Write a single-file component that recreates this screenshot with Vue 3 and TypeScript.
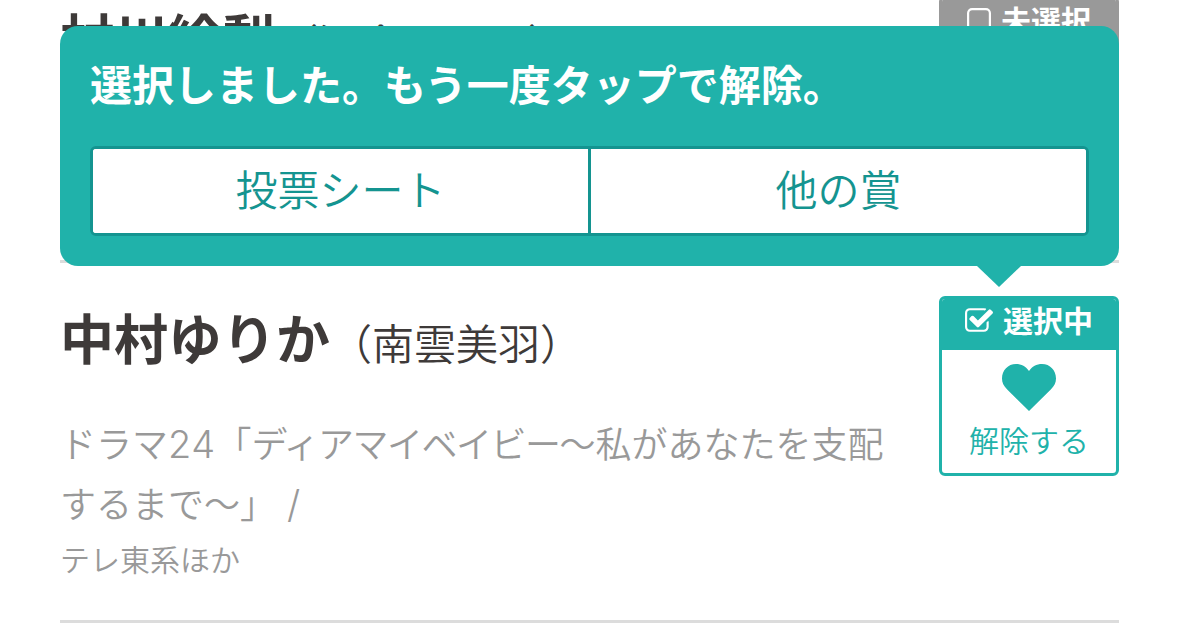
<template>
  <div class="page">
    <ul class="nominees">
      <li
        v-for="nominee in nominees"
        :key="nominee.name"
        class="nominee"
        :class="{ selected: nominee.selected }"
      >
        <div class="profile">
          <h2 class="name">{{ nominee.name }}<span class="role">（{{ nominee.role }}）</span></h2>
          <p v-if="nominee.lines.length" class="work">
            <span v-for="(line, i) in nominee.lines" :key="i" class="work-line">
              <span v-for="(part, j) in line" :key="j" :class="part.style">{{ part.text }}</span>
            </span>
          </p>
          <p v-if="nominee.station" class="station">{{ nominee.station }}</p>
        </div>

        <button type="button" class="vote" @click="nominee.selected = !nominee.selected">
          <span class="vote-state">
            <svg v-if="nominee.selected" class="check" viewBox="0 0 1664 1408">
              <path d="M1408 802v318q0 119-84.5 203.5t-203.5 84.5h-832q-119 0-203.5-84.5t-84.5-203.5v-832q0-119 84.5-203.5t203.5-84.5h832q63 0 117 25 15 7 18 23 3 17-9 29l-49 49q-10 10-23 10-3 0-9-2-23-6-45-6h-832q-66 0-113 47t-47 113v832q0 66 47 113t113 47h832q66 0 113-47t47-113v-254q0-13 9-22l64-64q10-10 23-10 6 0 12 3 20 8 20 29zm231-489l-814 814q-24 24-57 24t-57-24l-430-430q-24-24-24-57t24-57l110-110q24-24 57-24t57 24l263 263 647-647q24-24 57-24t57 24l110 110q24 24 24 57t-24 57z" />
            </svg>
            <svg v-else class="box" viewBox="0 0 24 24">
              <rect x="1.1" y="1.1" width="21.8" height="21.8" rx="4" />
            </svg>
            <span class="vote-state-text">{{ nominee.selected ? '選択中' : '未選択' }}</span>
          </span>
          <span class="vote-body">
            <svg class="heart" viewBox="0 0 54 47">
              <path d="M27 47L5.2 25.6C1.6 22 0 18.8 0 14.6C0 6.2 6 0 14 0C19.4 0 24 2.4 27 7C30 2.4 34.6 0 40 0C48 0 54 6.2 54 14.6C54 18.8 52.4 22 48.8 25.6Z" />
            </svg>
            <span class="vote-label">{{ nominee.selected ? '解除する' : '選択する' }}</span>
          </span>
        </button>
      </li>
    </ul>

    <div class="toast">
      <p class="toast-message">選択しました。もう一度タップで解除。</p>
      <div class="toast-actions">
        <button v-for="action in actions" :key="action" type="button" class="toast-action">{{ action }}</button>
      </div>
    </div>
  </div>
</template>

<script setup lang="ts">
import { ref } from 'vue'

interface TextPart {
  text: string
  style?: 'tight' | 'latin'
}

interface Nominee {
  name: string
  role: string
  lines: TextPart[][]
  station: string
  selected: boolean
}

const actions = ['投票シート', '他の賞']

const nominees = ref<Nominee[]>([
  { name: '村川絵梨', role: '沢倉さゆり', lines: [], station: '', selected: false },
  {
    name: '中村ゆりか',
    role: '南雲美羽',
    lines: [
      [
        { text: 'ドラマ' },
        { text: '24', style: 'latin' },
        { text: '「' },
        { text: 'ディアマイベイビー', style: 'tight' },
        { text: '〜私があなたを支配' }
      ],
      [{ text: 'するまで〜」' }, { text: ' /', style: 'latin' }]
    ],
    station: 'テレ東系ほか',
    selected: true
  }
])
</script>

<style>
body {
  margin: 0;
  background: #fff;
}
</style>

<style scoped>
.page {
  position: relative;
  box-sizing: border-box;
  width: 1178px;
  height: 623px;
  padding: 0 59px 0 60px;
  overflow: hidden;
  color: #3e3a39;
  font-family: "Noto Sans CJK JP", sans-serif;
  font-weight: 350;
}

.nominees {
  margin: -37px 0 0;
  padding: 0;
  list-style: none;
}

.nominee {
  display: flex;
  justify-content: space-between;
  box-sizing: border-box;
  height: 300px;
  padding-top: 33px;
  border-bottom: 3px solid #dcdcdc;
}

.nominee.selected {
  height: 360px;
}

.profile {
  flex: 1;
  white-space: nowrap;
}

.name {
  margin: 0;
  font-size: 54px;
  line-height: 82px;
  font-weight: 700;
}

.role {
  font-size: 42px;
  line-height: 1;
  font-weight: 350;
}

.work {
  margin: 34px 0 0;
  color: #999;
  font-size: 36px;
  line-height: 60px;
}

.work-line {
  display: block;
}

.tight {
  letter-spacing: -1.5px;
}

.latin {
  font-family: Inter, "Noto Sans CJK JP", sans-serif;
  font-size: 38px;
  font-weight: 300;
  line-height: 1;
  letter-spacing: 0.4px;
  white-space: pre;
}

.station {
  margin: 0;
  color: #999;
  font-size: 30px;
  line-height: 53px;
}

button {
  padding: 0;
  border: 0;
  color: inherit;
  font: inherit;
  cursor: pointer;
}

.vote {
  display: flex;
  flex-direction: column;
  box-sizing: border-box;
  width: 180px;
  height: 180px;
  border: 3px solid #999;
  border-radius: 6px;
  background: #fff;
  color: #999;
  overflow: hidden;
}

.selected .vote {
  border-color: #20b2aa;
  color: #20b2aa;
}

.vote-state {
  display: flex;
  align-items: center;
  justify-content: center;
  gap: 10px;
  box-sizing: border-box;
  width: 100%;
  height: 51px;
  padding-bottom: 10px;
  background: #999;
  color: #fff;
  font-size: 30px;
  line-height: 40px;
  font-weight: 700;
}

.vote-state-text {
  padding-bottom: 2px;
}

.selected .vote-state {
  background: #20b2aa;
}

.check {
  width: 28px;
  height: 24px;
  fill: #fff;
}

.box {
  width: 24px;
  height: 24px;
  fill: none;
  stroke: #fff;
  stroke-width: 2.2;
}

.vote-body {
  display: flex;
  flex-direction: column;
  align-items: center;
  width: 100%;
  padding-top: 14px;
}

.heart {
  width: 54px;
  height: 47px;
  fill: currentColor;
}

.vote-label {
  margin-top: 6px;
  font-size: 30px;
  line-height: 44px;
}

.toast {
  position: absolute;
  top: 26px;
  left: 60px;
  box-sizing: border-box;
  width: 1059px;
  height: 240px;
  padding: 30px;
  border-radius: 18px;
  background: #20b2aa;
}

/* 吹き出しの矢印 */
.toast::after {
  content: "";
  position: absolute;
  top: 100%;
  left: 917px;
  border: 22px solid transparent;
  border-top: 21px solid #20b2aa;
  border-bottom: 0;
}

.toast-message {
  margin: 0 0 36px;
  color: #fff;
  font-size: 42px;
  line-height: 54px;
  font-weight: 700;
}

.toast-actions {
  display: flex;
  box-sizing: border-box;
  height: 90px;
  border: 3px solid #149490;
  border-radius: 6px;
  background: #fff;
  overflow: hidden;
}

.toast-action {
  flex: 1;
  padding-bottom: 6px;
  background: #fff;
  color: #149490;
  font-size: 42px;
  line-height: 76px;
}

.toast-action + .toast-action {
  border-left: 3px solid #149490;
}
</style>
